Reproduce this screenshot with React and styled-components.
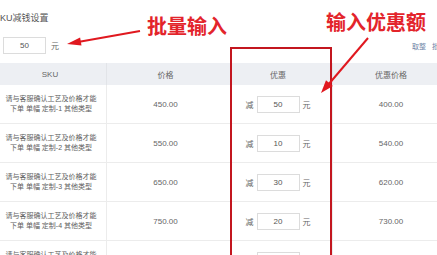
import { Fragment } from 'react';
import styled, { createGlobalStyle } from 'styled-components';

const GlobalStyle = createGlobalStyle`
  html, body {
    margin: 0;
    padding: 0;
    background: #fff;
    overflow: hidden;
  }
  body {
    font-family: "Liberation Sans", "Noto Sans CJK SC", sans-serif;
  }
`;

const Page = styled.div`
  position: relative;
  width: 437px;
  height: 255px;
  overflow: hidden;
`;

const Content = styled.div`
  width: 455px;
  margin-left: -6px;
  padding-top: 12px;
`;

const Heading = styled.div`
  font-size: 9px;
  line-height: 12px;
  color: #555;
`;

const Toolbar = styled.div`
  display: flex;
  align-items: center;
  justify-content: space-between;
  height: 17px;
  margin-top: 13px;
  padding: 0 3px 0 9px;
`;

const InputGroup = styled.div`
  display: flex;
  align-items: center;
  gap: ${props => props.$gap || 4}px;
`;

const Box = styled.div`
  box-sizing: border-box;
  width: 43px;
  height: 17px;
  border: 1px solid #dcdcdc;
  display: flex;
  align-items: center;
  justify-content: center;
  font-size: 8px;
  color: #555;
`;

const Unit = styled.span`
  font-size: 8px;
  color: #666;
`;

const Actions = styled.div`
  display: flex;
  gap: 6px;
  font-size: 7px;
  color: #6f86a8;
`;

const Table = styled.div`
  display: grid;
  grid-template-columns: 113px 117px 109px 116px;
  margin-top: 9px;
`;

const HeadCell = styled.div`
  height: 22px;
  background: #edeff3;
  display: flex;
  align-items: center;
  justify-content: center;
  font-size: 8px;
  color: #666;
  border-right: ${props => (props.$divider ? '1px solid #e2e4e8' : 'none')};
`;

const Cell = styled.div`
  box-sizing: border-box;
  height: 39px;
  display: flex;
  align-items: center;
  justify-content: center;
  border-bottom: 1px solid #ececec;
  border-right: ${props => (props.$divider ? '1px solid #ececec' : 'none')};
  font-size: 8px;
  color: #666;
`;

const SkuText = styled.div`
  font-size: 7px;
  line-height: 10px;
  text-align: center;
  color: #5e5e5e;
  padding-left: 2px;
`;

const Label = styled.div`
  position: absolute;
  left: ${props => props.$x}px;
  top: ${props => props.$y}px;
  font-family: "Noto Sans CJK SC", sans-serif;
  font-weight: 700;
  font-size: 20px;
  line-height: 20px;
  color: #e3242b;
  white-space: nowrap;
`;

const Overlay = styled.svg`
  position: absolute;
  left: 0;
  top: 0;
  pointer-events: none;
`;

const ROWS = [
  { n: 1, price: '450.00', cut: '50', final: '400.00' },
  { n: 2, price: '550.00', cut: '10', final: '540.00' },
  { n: 3, price: '650.00', cut: '30', final: '620.00' },
  { n: 4, price: '750.00', cut: '20', final: '730.00' },
  { n: 5, price: '850.00', cut: '10', final: '840.00' },
];

export default function App() {
  return (
    <Page>
      <GlobalStyle />
      <Content>
        <Heading>SKU减钱设置</Heading>
        <Toolbar>
          <InputGroup $gap={5}>
            <Box>50</Box>
            <Unit>元</Unit>
          </InputGroup>
          <Actions>
            <span>取整</span>
            <span>批量</span>
          </Actions>
        </Toolbar>

        <Table>
          <HeadCell $divider>SKU</HeadCell>
          <HeadCell>价格</HeadCell>
          <HeadCell $divider>优惠</HeadCell>
          <HeadCell>优惠价格</HeadCell>
          {ROWS.map(row => (
            <Fragment key={row.n}>
              <Cell $divider>
                <SkuText>
                  请与客服确认工艺及价格才能
                  <br />
                  下单 单幅 定制-{row.n} 其他类型
                </SkuText>
              </Cell>
              <Cell>{row.price}</Cell>
              <Cell $divider>
                <InputGroup $gap={3}>
                  <Unit>减</Unit>
                  <Box>{row.cut}</Box>
                  <Unit>元</Unit>
                </InputGroup>
              </Cell>
              <Cell>{row.final}</Cell>
            </Fragment>
          ))}
        </Table>
      </Content>

      <Overlay width="437" height="255" viewBox="0 0 437 255">
        <rect x="231" y="48" width="100" height="260" fill="none" stroke="#c3161f" strokeWidth="2" />
        <line x1="140" y1="31" x2="78" y2="42" stroke="#e0181f" strokeWidth="2" />
        <polygon points="67,44 81.5,45.5 80.1,37.6" fill="#e0181f" />
        <line x1="368" y1="38" x2="328" y2="85" stroke="#e0181f" strokeWidth="2" />
        <polygon points="321,93 332.9,86 326,80.2" fill="#e0181f" />
      </Overlay>
      <Label $x={147} $y={16}>批量输入</Label>
      <Label $x={326} $y={12}>输入优惠额</Label>
    </Page>
  );
}
